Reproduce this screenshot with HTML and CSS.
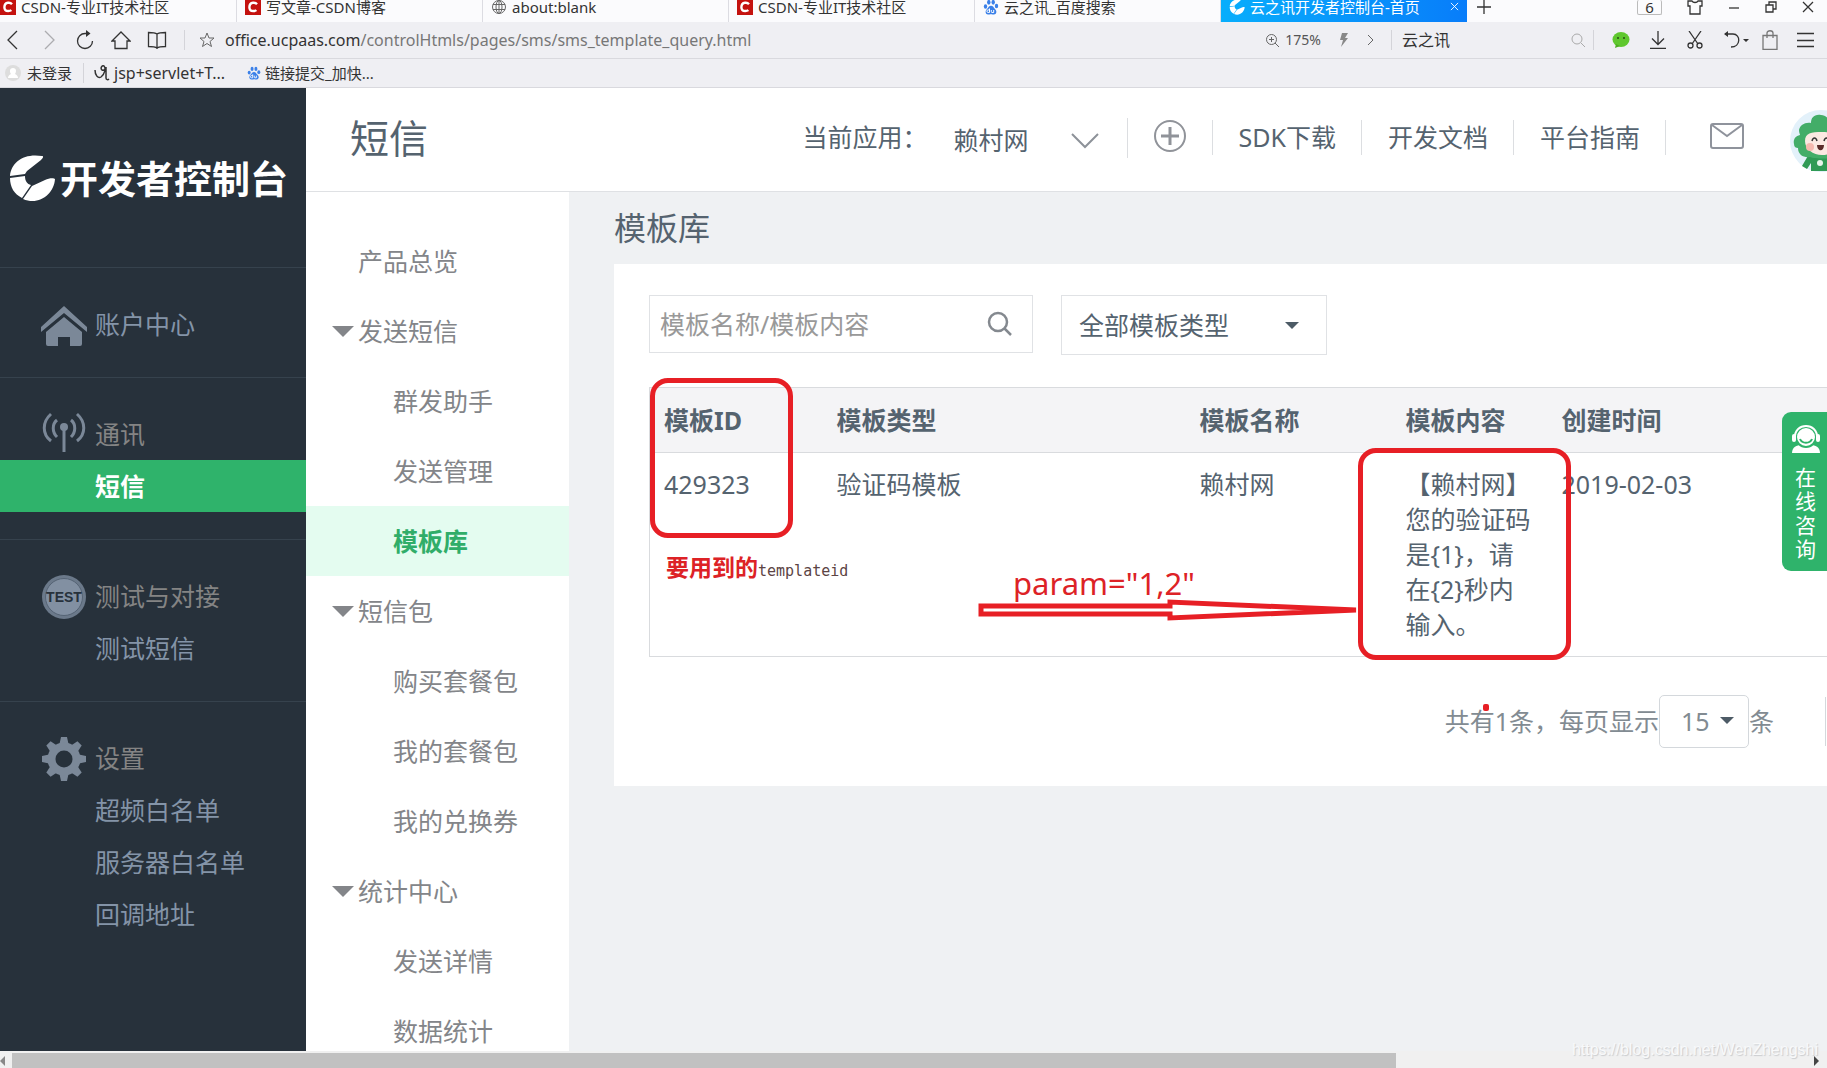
FILE: index.html
```html
<!DOCTYPE html>
<html lang="zh-CN">
<head>
<meta charset="utf-8">
<title>云之讯开发者控制台-首页</title>
<link rel="stylesheet" href="styles.css">
</head>
<body>
<svg class="defs" aria-hidden="true">
  <symbol id="i-csdn" viewBox="0 0 16 16"><rect width="16" height="16" fill="#c4120f"/><path d="M12 5.2C11 4 9.500 3.600 8 3.800 5.800 4.100 4.400 5.800 4.400 8.200c0 2.400 1.600 3.800 3.800 3.800 1.400 0 2.400-.3 3.200-.9" fill="none" stroke="#fff" stroke-width="2.400"/></symbol>
  <symbol id="i-paw" viewBox="0 0 16 16"><g fill="#3b80e8"><ellipse cx="2.500" cy="7.500" rx="1.700" ry="2.200"/><ellipse cx="5.800" cy="3.300" rx="1.700" ry="2.400"/><ellipse cx="10.200" cy="3.300" rx="1.700" ry="2.400"/><ellipse cx="13.500" cy="7" rx="1.700" ry="2.200"/><path d="M8 6.800c2 0 2.700 1.900 4 3.200 2.300 2.300 1.500 5.500-1 5.500-1.200 0-1.800-.3-3-.3s-1.800.3-3 .3c-2.500 0-3.300-3.200-1-5.500 1.300-1.300 2-3.200 4-3.200z"/></g><path d="M6.500 9.500v4H5.200a1.300 1.300 0 0 1 0-2.600h1.300M8.300 11v1.700c0 .5.300.8.800.8h1.600V11" fill="none" stroke="#fff"/></symbol>
  <symbol id="i-swirl" viewBox="0 0 46 48"><path d="M1 22C2 8 15-1 33 2c2 0 1 2-1 4L18 17l-2 3zM1 24l15-2c0 5 2 8 6 9l-9 13C5 40 1 33 1 24zM14 45l9-13 13-6c4-2 9-2 10-1-1 15-16 27-32 20z"/></symbol>
</svg>

<header class="browser">
  <nav class="tabs" aria-label="标签页">
    <a class="tab first" href="#"><svg><use href="#i-csdn"/></svg>CSDN-专业IT技术社区</a>
    <a class="tab" href="#"><svg><use href="#i-csdn"/></svg>写文章-CSDN博客</a>
    <a class="tab" href="#"><svg viewBox="0 0 16 16" class="line"><circle cx="8" cy="8" r="6.500"/><ellipse cx="8" cy="8" rx="3" ry="6.500"/><path d="M8 1.500v13M2 5.500h12M2 10.500h12"/></svg>about:blank</a>
    <a class="tab" href="#"><svg><use href="#i-csdn"/></svg>CSDN-专业IT技术社区</a>
    <a class="tab" href="#"><svg><use href="#i-paw"/></svg>云之讯_百度搜索</a>
    <a class="tab current" href="#"><svg fill="#fff"><use href="#i-swirl"/></svg><span>云之讯开发者控制台-首页</span><svg class="tab-close" viewBox="0 0 10 10"><path d="M1 1l8 8M9 1L1 9"/></svg></a>
    <button class="icon-btn" aria-label="新建标签页"><svg width="14" height="14" viewBox="0 0 14 14"><path d="M7 0v14M0 7h14"/></svg></button>
    <div class="window-controls">
      <span class="count">6</span>
      <button class="icon-btn" aria-label="皮肤"><svg width="16" height="16" viewBox="0 0 16 16"><path d="M5 2H1v5h2v8h10V7h2V2h-4c-1 2-5 2-6 0z"/></svg></button>
      <button class="icon-btn" aria-label="最小化"><svg width="12" height="16" viewBox="0 0 12 16"><path d="M1 9h10"/></svg></button>
      <button class="icon-btn" aria-label="还原"><svg width="12" height="12" viewBox="0 0 12 12"><path d="M1 4h7v7H1zM4 4V1h7v7H8"/></svg></button>
      <button class="icon-btn" aria-label="关闭"><svg width="12" height="12" viewBox="0 0 12 12"><path d="M1 1l10 10M11 1L1 11"/></svg></button>
    </div>
  </nav>

  <div class="toolbar">
    <div class="nav-buttons">
      <button class="icon-btn" aria-label="后退"><svg width="20" height="20" viewBox="0 0 20 20"><path d="M14 1L5 10l9 9"/></svg></button>
      <button class="icon-btn faded" aria-label="前进"><svg width="20" height="20" viewBox="0 0 20 20"><path d="M6 1l9 9-9 9"/></svg></button>
      <button class="icon-btn" aria-label="刷新"><svg width="20" height="20" viewBox="0 0 20 20"><path d="M17.500 11A7.500 7.500 0 1 1 10 3.500h3"/><path d="M11 0l4.500 3.500L11 7z" fill="#333" stroke="none"/></svg></button>
      <button class="icon-btn" aria-label="主页"><svg width="20" height="20" viewBox="0 0 20 20"><path d="M1 11l9-9 9 9h-3v7.500H4V11z"/></svg></button>
      <button class="icon-btn" aria-label="阅读"><svg width="20" height="20" viewBox="0 0 20 20"><path d="M10 4v15M10 4C8 2.500 5 2.500 1.500 2.500v14c3.500 0 6.500 0 8.500 1.500 2-1.500 5-1.500 8.500-1.500v-14C15 2.500 12 2.500 10 4z"/></svg></button>
    </div>
    <div class="address">
      <svg width="16" height="16" viewBox="0 0 16 16" class="line"><path d="M8 1l2 5h5l-4 3.500 1.500 5L8 11.500l-4.500 3 1.500-5L1 6h5z"/></svg>
      <p class="url">office.ucpaas.com<span>/controlHtmls/pages/sms/sms_template_query.html</span></p>
      <div class="zoom"><svg width="15" height="15" viewBox="0 0 15 15" class="line"><circle cx="6.500" cy="6.500" r="5"/><path d="M10 10l4 4M4 6.500h5M6.500 4v5"/></svg>175%</div>
      <svg width="12" height="16" viewBox="0 0 12 16"><path d="M4 1h6L7 6h3l-7 9 2-7H2z" fill="#888"/></svg>
      <svg width="8" height="12" viewBox="0 0 8 12" class="line"><path d="M1 1l5 5-5 5"/></svg>
    </div>
    <label class="quick-search"><input type="text" value="云之讯" aria-label="搜索"><svg width="14" height="14" viewBox="0 0 14 14" class="line light"><circle cx="6" cy="6" r="5"/><path d="M10 10l4 4"/></svg></label>
    <div class="tools">
      <button class="icon-btn" aria-label="微信"><svg width="18" height="18" viewBox="0 0 18 18"><ellipse cx="9" cy="8.500" rx="8.500" ry="7.500" fill="#5fc72e" stroke="none"/><path d="M4 13l-1 4 5-2z" fill="#4dad20" stroke="none"/><circle cx="6" cy="7" r="1" fill="#264d12" stroke="none"/><circle cx="12" cy="7" r="1" fill="#264d12" stroke="none"/></svg></button>
      <button class="icon-btn" aria-label="下载"><svg width="18" height="18" viewBox="0 0 18 18"><path d="M9 0v13M3 7.500l6 6 6-6M1 17.500h16"/></svg></button>
      <button class="icon-btn" aria-label="剪切"><svg width="18" height="18" viewBox="0 0 18 18"><path d="M3 0l9 13M15 0L6 13"/><circle cx="4.500" cy="14.500" r="2.500"/><circle cx="13.500" cy="14.500" r="2.500"/></svg></button>
      <button class="icon-btn" aria-label="撤销"><svg width="26" height="18" viewBox="0 0 26 18"><path d="M2 3h8c8 0 8 13-2 13"/><path d="M1 3l4-3v6zM20 8h6l-3 3z" fill="#333" stroke="none"/></svg></button>
      <button class="icon-btn" aria-label="购物"><svg width="16" height="20" viewBox="0 0 16 20"><path d="M1 5.500h14v14H1zM5 8V3c0-3 6-3 6 0v5" stroke="#777"/></svg></button>
      <button class="icon-btn" aria-label="菜单"><svg width="17" height="16" viewBox="0 0 17 16"><path d="M0 1.500h17M0 8.500h17M0 14.500h17"/></svg></button>
    </div>
  </div>

  <div class="bookmarks">
    <a class="login" href="#"><svg width="16" height="16" viewBox="0 0 16 16"><circle cx="8" cy="8" r="8" fill="#ddd"/><path d="M8 3c3 0 4 3 2 6 2 1 3 2 3 4H3c0-2 1-3 3-4-2-3-1-6 2-6z" fill="#fff"/></svg>未登录</a>
    <a class="wide" href="#"><svg width="16" height="16" viewBox="0 0 16 16"><path d="M1 5c0 5 3 9 6 7 4-3 5-9 3-11-2-1-4 2-2 4 2 1 4-1 4-3v11c0 2 2 2 3 1" fill="none" stroke="#333" stroke-width="1.500"/></svg>jsp+servlet+T...</a>
    <a href="#"><svg width="14" height="14"><use href="#i-paw"/></svg>链接提交_加快...</a>
  </div>
</header>

<div class="app">
  <aside class="sidebar">
    <a class="logo" href="#"><svg width="46" height="48" fill="#fff"><use href="#i-swirl"/></svg>开发者控制台</a>
    <section>
      <h2><svg width="46" height="46" viewBox="0 0 46 46"><path d="M0 26L23 5l23 21v5L23 12 0 31zM5 31l18-15 18 15v12q0 2-2 2H29v-9H17v9H7q-2 0-2-2z" fill="#7b8898"/></svg><a href="#">账户中心</a></h2>
    </section>
    <section>
      <h2 class="plain"><svg width="46" height="46" viewBox="0 0 46 46" fill="none" stroke="#7b8898" stroke-width="3"><path d="M23 18v23M16 9c-5 4-5 12 0 17M30 9c5 4 5 12 0 17M10 3c-9 8-9 20 0 27M36 3c9 8 9 20 0 27"/><circle cx="23" cy="16" r="4" fill="#7b8898" stroke="none"/></svg>通讯</h2>
      <a class="current" href="#">短信</a>
    </section>
    <section>
      <h2 class="plain"><svg width="46" height="46" viewBox="0 0 46 46"><circle cx="23" cy="24" r="22" fill="#6b798a"/><circle cx="23" cy="24" r="18.500" fill="#8290a2" stroke="#566475"/><text x="23" y="29" text-anchor="middle" class="test-mark">TEST</text></svg>测试与对接</h2>
      <a href="#">测试短信</a>
    </section>
    <section>
      <h2 class="plain"><svg width="46" height="46" viewBox="-23 -24 46 46"><g fill="#7b8898"><g id="teeth"><path id="tooth" d="M-4.500-15L-3-22h6l1.500 7v30L3 22h-6l-1.500-7z"/><use href="#tooth" transform="rotate(90)"/></g><use href="#teeth" transform="rotate(45)"/><circle r="16.500"/></g><circle r="8.500" fill="#27313b"/></svg>设置</h2>
      <a href="#">超频白名单</a>
      <a href="#">服务器白名单</a>
      <a href="#">回调地址</a>
    </section>
  </aside>

  <div class="workspace">
    <header class="topbar">
      <h1>短信</h1>
      <div class="top-actions">
        <span>当前应用：</span>
        <button class="app-picker">赖村网<svg width="28" height="16" viewBox="0 0 28 16"><path d="M1 1l13 13L27 1" fill="none" stroke="#8d9299" stroke-width="2"/></svg></button>
        <button class="add" aria-label="新增应用"><svg width="34" height="34" viewBox="0 0 34 34" fill="none" stroke="#909399" stroke-width="2"><circle cx="17" cy="17" r="15"/><path d="M17 8v18M8 17h18" stroke-width="3"/></svg></button>
        <a href="#">SDK下载</a>
        <a href="#">开发文档</a>
        <a href="#">平台指南</a>
        <button class="mail" aria-label="消息"><svg width="34" height="27" viewBox="0 0 34 27" fill="none" stroke="#8f939c" stroke-width="2"><rect x="1" y="1" width="32" height="24" rx="2"/><path d="M2 2l15 11L32 2"/></svg></button>
        <div class="avatar"><svg width="62" height="62" viewBox="0 0 62 62"><circle cx="31" cy="31" r="31" fill="#e3f1fa"/><path d="M19 44l-7 12 5 3 4-6v8h24V44z" fill="#2f9a55"/><path d="M31 5c-7-1-10 3-10 8-6-1-11 2-12 7 0 3 1 4 1 5-5 1-7 5-6 9 0 3 2 4 4 4 0 7 6 10 12 9 4 2 24 2 28 0 8 0 11-5 11-10 0-6-4-10-9-11 0-5-4-9-9-9 0-4-3-12-10-12z" fill="#43ad68"/><path d="M15 31c0-8 6-9 17-9s17 4 17 11-8 12-17 12-17-6-17-14z" fill="#fbe9e2"/><circle cx="20" cy="37" r="4" fill="#f5b9af"/><path d="M22 31c1-4 4-4 5 0M34 31c1-4 4-4 5 0" fill="none" stroke="#333" stroke-width="1.500"/><path d="M27 35h7c0 7-7 7-7 0z" fill="#5a2b28"/><circle cx="30" cy="53" r="3" fill="#e7f5ec"/></svg></div>
      </div>
    </header>

    <div class="columns">
      <nav class="submenu" aria-label="短信菜单">
        <a href="#">产品总览</a>
        <a class="group" href="#">发送短信</a>
        <a class="child" href="#">群发助手</a>
        <a class="child" href="#">发送管理</a>
        <a class="child current" href="#">模板库</a>
        <a class="group" href="#">短信包</a>
        <a class="child" href="#">购买套餐包</a>
        <a class="child" href="#">我的套餐包</a>
        <a class="child" href="#">我的兑换券</a>
        <a class="group" href="#">统计中心</a>
        <a class="child" href="#">发送详情</a>
        <a class="child" href="#">数据统计</a>
      </nav>

      <main>
        <h2 class="page-title">模板库</h2>
        <div class="card">
          <form class="filters">
            <label class="search"><input type="text" placeholder="模板名称/模板内容" aria-label="模板名称/模板内容"><svg width="26" height="26" viewBox="0 0 26 26" fill="none" stroke="#84898f" stroke-width="2.500"><circle cx="11" cy="11" r="9"/><path d="M17 17l7 7"/></svg></label>
            <div class="pick"><select aria-label="模板类型"><option>全部模板类型</option></select></div>
          </form>
          <table>
            <colgroup><col class="c-id"><col class="c-type"><col class="c-name"><col class="c-body"><col></colgroup>
            <thead><tr><th>模板ID</th><th>模板类型</th><th>模板名称</th><th>模板内容</th><th>创建时间</th></tr></thead>
            <tbody><tr><td>429323</td><td>验证码模板</td><td>赖村网</td><td>【赖村网】<br>您的验证码<br>是{1}，请<br>在{2}秒内<br>输入。</td><td>2019-02-03</td></tr></tbody>
          </table>
          <div class="pager">
            <label for="size">共有1条，每页显示</label>
            <div class="pick small"><select id="size"><option>15</option></select></div>
            <span>条</span>
            <button class="page-prev" aria-label="上一页"></button>
          </div>

          <div class="mark mark-id"></div>
          <div class="mark mark-body"></div>
          <p class="note note-id"><b>要用到的</b><code>templateid</code></p>
          <p class="note note-param">param="1,2"</p>
          <svg class="note arrow" width="382" height="24" viewBox="0 0 382 24" fill="none" stroke="#e71f25" stroke-width="5"><path d="M3 8h189V4l186 8-186 8v-4H3z"/></svg>
          <i class="note dot"></i>
        </div>
      </main>
    </div>
  </div>

  <button class="support"><svg width="30" height="30" viewBox="0 0 30 30"><path d="M1 29c0-6 5-8 9-8h10c4 0 9 2 9 8z" fill="#fff"/><circle cx="15" cy="13" r="10" fill="#fff" stroke="#2fb36b" stroke-width="2"/><path d="M4 14C3 -2 27-2 26 14" fill="none" stroke="#fff" stroke-width="2"/><rect x="1" y="10" width="4" height="8" rx="2" fill="#fff"/><rect x="25" y="10" width="4" height="8" rx="2" fill="#fff"/><path d="M9 15c2 5 10 5 12 0" fill="none" stroke="#2fb36b" stroke-width="2"/></svg><span>在线咨询</span></button>
</div>

<div class="scrollbar"><i class="arrow-left"></i><i class="thumb"></i><i class="arrow-right"></i></div>
<p class="watermark">https://blog.csdn.net/WenZhengshi</p>
</body>
</html>
```
FILE: styles.css
```css
* { box-sizing: border-box; }
body {
  margin: 0;
  height: 100vh;
  display: flex;
  flex-direction: column;
  overflow: hidden;
  font: 25px/35px "Noto Sans", "Noto Sans CJK SC", sans-serif;
  color: #55636f;
  background: #eff1f3;
}
a { color: inherit; text-decoration: none; }
h1, h2, p { margin: 0; font-weight: 400; }
button, input, select { font: inherit; color: inherit; }
button { padding: 0; border: 0; background: none; }
svg { flex: none; display: block; }
.defs { position: absolute; width: 0; height: 0; }

/* browser chrome */
.browser { flex: none; font-size: 15px; line-height: 20px; color: #333; background: #efeff3; }
.line { fill: none; stroke: #666; }
.light { stroke: #aaa; }
.icon-btn { display: flex; align-items: center; }
.icon-btn svg { fill: none; stroke: #333; stroke-width: 1.3; }
.faded { opacity: .35; }
.tabs { display: flex; height: 22px; background: #fbfbfd; }
.tab {
  flex: 0 1 246px;
  height: 22px;
  display: flex;
  align-items: center;
  gap: 5px;
  padding: 0 8px 9px;
  border-right: 1px solid #dcdce2;
  white-space: nowrap;
}
.tab.first { flex-basis: 237px; padding-left: 0; }
.tab svg { width: 16px; height: 16px; }
.tab.current { color: #fff; border: 0; background: linear-gradient(90deg, #08aefc, #087dfa); }
.tab.current span { flex: 1; }
.tab svg.tab-close { width: 9px; height: 9px; stroke: #fff; }
.tabs .icon-btn { padding-bottom: 8px; }
.tabs > .icon-btn { margin-left: 10px; }
.window-controls { margin-left: auto; display: flex; gap: 25px; padding-right: 13px; }
.count { width: 25px; height: 15px; line-height: 14px; text-align: center; border: 1px solid #bbb; border-top: 0; border-radius: 2px; }
.toolbar { display: flex; align-items: center; height: 37px; border-bottom: 1px solid #d9d9de; }
.nav-buttons { display: flex; gap: 16px; padding: 0 17px 0 3px; border-right: 1px solid #d4d4d9; }
.address { flex: 1; display: flex; align-items: center; padding: 0 16px 0 14px; gap: 17px; }
.url { flex: 1; margin-left: -7px; font-size: 16px; white-space: nowrap; }
.url span { color: #777; }
.zoom { display: flex; align-items: center; gap: 5px; color: #555; font-size: 14px; }
.quick-search { width: 203px; display: flex; align-items: center; border: solid #d4d4d9; border-width: 0 1px; padding: 0 8px 0 10px; }
.quick-search input { flex: 1; min-width: 0; height: 20px; padding: 0; border: 0; background: none; font-size: 16px; }
.tools { display: flex; align-items: center; gap: 19px; padding: 0 13px 0 18px; }
.tools button:nth-child(4) { margin-right: -6px; }
.bookmarks { display: flex; align-items: center; height: 29px; border-bottom: 1px solid #d9d9de; }
.bookmarks a { display: flex; align-items: center; gap: 4px; margin-right: 22px; }
.bookmarks .login { margin: 0 10px 0 5px; padding-right: 11px; border-right: 1px solid #d4d4d9; gap: 6px; }
.bookmarks .wide { font-size: 16px; }

/* application */
.app { position: relative; flex: 1; min-height: 0; display: flex; overflow: hidden; }
.sidebar { flex: 0 0 306px; background: #27313b; color: #8494a8; }
.logo { height: 179px; display: flex; align-items: center; gap: 5px; padding: 0 0 0 9px; color: #fff; font-size: 38px; font-weight: 700; line-height: 52px; white-space: nowrap; }
.sidebar section { border-top: 1px solid #36424d; padding: 30px 0 27px; }
.sidebar h2 { display: flex; align-items: center; height: 52px; gap: 8px; padding-left: 41px; font-size: 25px; }
.sidebar .plain { color: #848484; }
.sidebar section > a { display: block; line-height: 52px; padding-left: 95px; }
.sidebar .current { color: #fff; font-weight: 700; background: #2fb36b; }
.test-mark { font: 700 14px "Liberation Sans", sans-serif; fill: #27313b; }

.workspace { flex: 1; min-width: 0; display: flex; flex-direction: column; }
.topbar { flex: none; height: 104px; display: flex; align-items: center; justify-content: space-between; padding: 0 0 4px 44px; background: #fff; border-bottom: 1px solid #dfe1e4; }
h1 { font-size: 39px; line-height: 52px; }
.top-actions { display: flex; align-items: center; white-space: nowrap; }
.top-actions > a { border-left: 1px solid #dcdee1; padding: 0 25px 0 26px; }
.app-picker { display: flex; align-items: center; gap: 42px; margin-left: 26px; padding: 6px 28px 0 0; }
.add { height: 40px; padding: 0 25px 4px; border-left: 1px solid #dcdee1; }
.mail { height: 35px; padding: 0 46px 2px 44px; border-left: 1px solid #dcdee1; }
.avatar { width: 37px; padding-top: 6px; overflow: hidden; }

.columns { flex: 1; display: flex; min-height: 0; }
.submenu { flex: 0 0 263px; padding-top: 34px; background: #fff; color: #838589; }
.submenu a { display: flex; align-items: center; height: 70px; padding-left: 52px; }
.submenu .group { padding-left: 26px; gap: 4px; }
.submenu .group::before { content: ""; border: 11px solid transparent; border-top-color: #838589; border-bottom: 0; }
.submenu .child { padding-left: 87px; }
.submenu .current { color: #30ad69; font-weight: 700; background: #e4fcf0; }

main { flex: 1; min-width: 0; padding-left: 45px; }
.page-title { font-size: 32px; line-height: 72px; height: 72px; }
.card { position: relative; background: #fff; padding: 31px 0 38px 35px; }
.filters { display: flex; gap: 28px; }
.search { width: 384px; height: 58px; display: flex; align-items: center; padding: 0 19px 0 10px; border: 1px solid #e0e2e5; }
.search input { flex: 1; min-width: 0; padding: 0; border: 0; outline: 0; background: none; }
.search input::placeholder { color: #999; opacity: 1; }
.pick { position: relative; width: 266px; height: 60px; }
.pick select { width: 100%; height: 100%; appearance: none; border: 1px solid #e0e2e5; background: #fff; padding: 0 17px; }
.pick::after { content: ""; position: absolute; right: 28px; top: 27px; border: 7px solid transparent; border-top-color: #4d5b66; border-bottom: 0; pointer-events: none; }
table { width: 100%; margin-top: 32px; table-layout: fixed; border-collapse: collapse; border: 1px solid #d9dbde; border-right: 0; }
.c-id { width: 173px; }
.c-type { width: 363px; }
.c-name { width: 206px; }
.c-body { width: 156px; }
th, td { text-align: left; vertical-align: top; padding: 14px 0 14px 14px; white-space: nowrap; }
th { background: #f4f4f6; border-bottom: 1px solid #d9dbde; padding-top: 15px; }
.pager { display: flex; align-items: center; justify-content: flex-end; margin-top: 38px; color: #828b92; }
.pick.small { width: 90px; height: 53px; }
.small select { border-color: #d4d8dc; border-radius: 5px; padding: 0 21px; }
.small::after { right: 15px; top: 22px; }
.page-prev { width: 2px; height: 49px; margin-left: 51px; border-left: 1px solid #d4d8dc; }

/* annotations drawn over the card */
.mark { position: absolute; border: 5px solid #e71f25; border-radius: 18px; }
.mark-id { left: 36px; top: 114px; width: 143px; height: 160px; }
.mark-body { left: 744px; top: 184px; width: 213px; height: 212px; }
.note { position: absolute; color: #dd2226; white-space: nowrap; }
.note-id { left: 52px; top: 286px; font-size: 23px; }
.note-id code { font: 15px "DejaVu Sans Mono", monospace; color: #5c4444; }
.note-param { left: 399px; top: 302px; font-size: 31px; }
.arrow { left: 364px; top: 334px; }
.dot { left: 869px; top: 440px; width: 6px; height: 7px; border-radius: 2px; background: #e71f25; }

.support { position: absolute; right: 0; top: 324px; width: 45px; height: 159px; display: flex; flex-direction: column; align-items: center; padding: 12px 0 0 2px; gap: 11px; border-radius: 9px 0 0 9px; background: #2fb36b; color: #fff; font-size: 21px; line-height: 24px; }
.support span { width: 21px; word-break: break-all; }

.scrollbar { flex: none; height: 17px; display: flex; align-items: center; background: #f0f0f0; padding-top: 2px; }
.scrollbar .thumb { width: 1384px; flex: 0 1 auto; height: 15px; background: #c1c1c1; }
.arrow-left, .arrow-right { border: 5px solid transparent; }
.arrow-left { border-right-color: #888; border-left: 0; margin-right: 7px; }
.arrow-right { border-left-color: #444; border-right: 0; margin-left: auto; margin-right: 8px; }
.watermark { position: absolute; right: 9px; bottom: 8px; font: 16px/20px "Liberation Sans", sans-serif; color: #f8f9fa; text-shadow: 1px 1px 1px #c9cbce; }
```
